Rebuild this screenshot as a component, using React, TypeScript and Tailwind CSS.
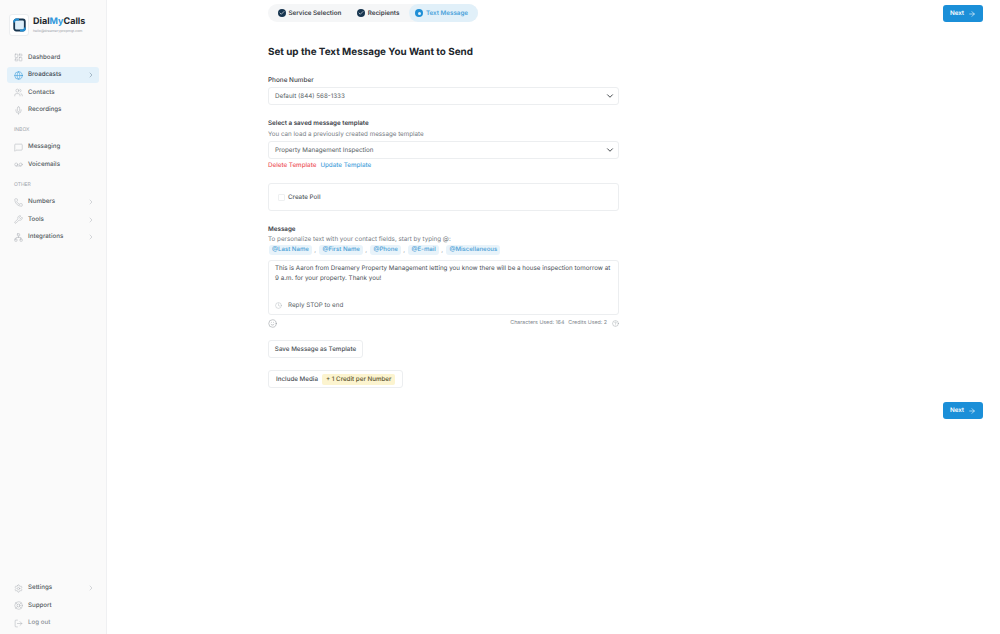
import React from "react";
import { ChevronRight, ChevronDown, ArrowRight, Check, LayoutDashboard, Globe, Users, Mic, MessageSquare, Voicemail, Phone, Wrench, Network, Settings, LifeBuoy, LogOut, Clock, Smile, HelpCircle } from "lucide-react";

function NavItem({ icon: Icon, label, active, chevron, muted }: { icon: any; label: string; active?: boolean; chevron?: boolean; muted?: boolean }) {
  return (
    <div className={`flex h-[16px] items-center rounded-[3px] pl-[7px] pr-[4px] ${active ? "bg-[#e3f1fa]" : ""}`}>
      <Icon size={9} strokeWidth={1.3} className={active ? "text-[#1f8fd6]" : "text-[#a8adb3]"} />
      <span className={`ml-[5px] flex-1 text-[6.2px] font-medium leading-[16px] ${active ? "text-[#3f4a54]" : muted ? "text-[#8a9097]" : "text-[#555c63]"}`}>{label}</span>
      {chevron && <ChevronRight size={8} strokeWidth={1.4} className={active ? "text-[#5c7a8e]" : "text-[#a8adb3]"} />}
    </div>
  );
}

function Step({ label, active, spacing }: { label: string; active?: boolean; spacing: string }) {
  return (
    <div className={`flex h-[18px] items-center gap-[2.5px] ${spacing} ${active ? "rounded-full bg-[#e1f0f9] text-[#4ca3db]" : "text-[#3c4249]"}`}>
      {active ? (
        <span className="flex h-[8px] w-[8px] items-center justify-center rounded-full bg-[#1f8fd6]">
          <span className="h-[3px] w-[3px] rounded-full bg-[#e1f0f9]" />
        </span>
      ) : (
        <span className="flex h-[8px] w-[8px] items-center justify-center rounded-full bg-[#17354f]">
          <Check size={6} strokeWidth={2.5} className="text-white" />
        </span>
      )}
      <span className="text-[6.25px] font-semibold leading-[18px]">{label}</span>
    </div>
  );
}

function NextButton() {
  return (
    <div className="flex h-[17px] w-[40px] items-center justify-center gap-[4px] rounded-[3px] bg-[#1b8fd8] text-white">
      <span className="text-[6.25px] font-semibold leading-[17px]">Next</span>
      <ArrowRight size={8} strokeWidth={1.8} />
    </div>
  );
}

function SelectBox({ value }: { value: string }) {
  return (
    <div className="flex h-[18px] items-center justify-between rounded-[3px] border border-[#eceef0] bg-white pl-[6px] pr-[3px]">
      <span className="text-[6.25px] leading-[16px] text-[#555c63]">{value}</span>
      <ChevronDown size={10} strokeWidth={2} className="text-[#22272c]" />
    </div>
  );
}

function Tag({ label }: { label: string }) {
  return <span className="flex h-[10px] items-center rounded-[3px] bg-[#e8f3fa] px-[3px] text-[6.1px] font-medium leading-[10px] text-[#4a9fd6]">{label}</span>;
}

function Comma() {
  return <span className="w-[3px] text-[6.25px] leading-[10px] text-[#9aa1a8]">,</span>;
}

export default function App() {
  return (
    <div className="flex h-[634px] w-[1000px] overflow-hidden bg-white font-['Inter',sans-serif] opacity-[0.999] [text-rendering:geometricPrecision]">
      <aside className="flex w-[107px] shrink-0 flex-col border-r border-[#eff0f2] bg-[#fafafa] pb-[3px]">
        <div className="ml-[9px] mt-[14px] flex items-center gap-[4px]">
          <div className="flex h-[22px] w-[20px] items-center justify-center rounded-[3px] border border-[#eceef0] bg-white">
            <svg width="13" height="14" viewBox="0 0 13 14">
              <rect x="1.2" y="1.5" width="10.6" height="11" rx="2" fill="#dceefa" stroke="#17354f" strokeWidth="1.8" />
              <path d="M1.2 4.5V3.5a2 2 0 0 1 2-2H6M7 12.5h2.8a2 2 0 0 0 2-2V9.5" fill="none" stroke="#1f8fd6" strokeWidth="1.8" />
            </svg>
          </div>
          <div className="flex flex-col">
            <span className="text-[9px] font-bold leading-[12px] text-[#22272c]">
              Dial<span className="text-[#2e96da]">My</span>Calls
            </span>
            <span className="text-[3.5px] leading-[6px] text-[#9aa1a8]">hello@dreamerypropmgt.com</span>
          </div>
        </div>

        <nav className="mt-[13.5px] flex flex-col gap-[1.5px] px-[7px]">
          <NavItem icon={LayoutDashboard} label="Dashboard" />
          <NavItem icon={Globe} label="Broadcasts" active chevron />
          <NavItem icon={Users} label="Contacts" />
          <NavItem icon={Mic} label="Recordings" />
        </nav>
        <div className="ml-[14px] mt-[7.5px] h-[9px] text-[5px] leading-[9px] text-[#9aa1a8]">INBOX</div>
        <nav className="mt-[4.5px] flex flex-col gap-[1.5px] px-[7px]">
          <NavItem icon={MessageSquare} label="Messaging" />
          <NavItem icon={Voicemail} label="Voicemails" />
        </nav>
        <div className="ml-[14px] mt-[8px] h-[9px] text-[5px] leading-[9px] text-[#9aa1a8]">OTHER</div>
        <nav className="mt-[4.5px] flex flex-col gap-[1.5px] px-[7px]">
          <NavItem icon={Phone} label="Numbers" chevron />
          <NavItem icon={Wrench} label="Tools" chevron />
          <NavItem icon={Network} label="Integrations" chevron />
        </nav>
        <nav className="mt-auto flex flex-col gap-[1.5px] px-[7px]">
          <NavItem icon={Settings} label="Settings" chevron />
          <NavItem icon={LifeBuoy} label="Support" />
          <NavItem icon={LogOut} label="Log out" muted />
        </nav>
      </aside>

      <main className="flex flex-1 flex-col pl-[161px] pr-[17px]">
        <div className="mt-[4px] flex items-start justify-between">
          <div className="flex h-[18px] items-center rounded-full bg-[#f5f6f7] pl-[4px]">
            <Step label="Service Selection" spacing="pl-[6px] pr-[8px]" />
            <Step label="Recipients" spacing="pl-[8px] pr-[10px]" />
            <Step label="Text Message" active spacing="pl-[6px] pr-[10px]" />
          </div>
          <div className="mt-[1px]"><NextButton /></div>
        </div>

        <h1 className="mt-[23px] text-[9.85px] font-bold leading-[14px] text-[#22272c]">Set up the Text Message You Want to Send</h1>

        <div className="flex w-[351px] flex-col">
          <label className="mt-[17px] text-[6.4px] font-medium leading-[9px] text-[#3c4249]">Phone Number</label>
          <div className="mt-[2px]"><SelectBox value="Default (844) 568-1333" /></div>

          <label className="mt-[14px] text-[6.25px] font-semibold leading-[9px] text-[#3c4249]">Select a saved message template</label>
          <p className="mt-[2px] text-[6.25px] leading-[9px] text-[#777d84]">You can load a previously created message template</p>
          <div className="mt-[2px]"><SelectBox value="Property Management Inspection" /></div>
          <div className="mt-[2px] flex gap-[4px] text-[6.25px] font-medium leading-[9px]">
            <span className="text-[#ee5a5f]">Delete Template</span>
            <span className="text-[#4ca3db]">Update Template</span>
          </div>

          <div className="mt-[13px] flex h-[28px] items-center rounded-[3px] border border-[#eceef0] pl-[9px]">
            <span className="h-[7px] w-[7px] rounded-[1px] border border-[#eef0f1]" />
            <span className="ml-[3px] text-[6.25px] font-medium leading-[10px] text-[#555c63]">Create Poll</span>
          </div>

          <label className="mt-[14px] text-[6.25px] font-semibold leading-[9px] text-[#3c4249]">Message</label>
          <p className="mt-[1px] text-[6.25px] leading-[9px] text-[#777d84]">To personalize text with your contact fields, start by typing @:</p>
          <div className="mt-[1px] flex gap-[2.25px] pl-[1px]">
            <Tag label="@Last Name" />
            <Comma />
            <Tag label="@First Name" />
            <Comma />
            <Tag label="@Phone" />
            <Comma />
            <Tag label="@E-mail" />
            <Comma />
            <Tag label="@Miscellaneous" />
          </div>
          <div className="mt-[5px] flex h-[55px] flex-col rounded-[3px] border border-[#eceef0] pl-[6px] pr-[6px]">
            <p className="mt-[3px] text-[6.25px] leading-[9.5px] text-[#4a5056]">
              This is Aaron from Dreamery Property Management letting you know there will be a house inspection tomorrow at 9 a.m. for your property. Thank you!
            </p>
            <div className="mt-auto mb-[4px] flex items-center gap-[6px]">
              <Clock size={7} strokeWidth={1.2} className="text-[#9aa1a8]" />
              <span className="text-[6.25px] leading-[10px] text-[#555c63]">Reply STOP to end</span>
            </div>
          </div>
          <div className="mt-[4px] flex items-center justify-between">
            <Smile size={9} strokeWidth={1.2} className="text-[#7d848b]" />
            <div className="flex items-center gap-[4px] text-[5.3px] leading-[9px] text-[#7d848b]">
              <span>Characters Used: 164</span>
              <span>Credits Used: 2</span>
              <HelpCircle size={7} strokeWidth={1.2} className="ml-[1px]" />
            </div>
          </div>

          <div className="mt-[12px] flex h-[18px] w-[95px] items-center justify-center rounded-[3px] border border-[#eceef0] text-[6.25px] font-medium leading-[10px] text-[#4a5056]">
            Save Message as Template
          </div>
          <div className="mt-[12px] flex h-[18px] w-[135px] items-center rounded-[3px] border border-[#eceef0] pl-[7px] text-[6.25px] font-medium leading-[10px] text-[#4a5056]">
            Include Media
            <span className="ml-[4px] flex h-[11px] items-center rounded-[2px] bg-[#fcf4cf] px-[4px] text-[#5b5430]">+ 1 Credit per Number</span>
          </div>
        </div>

        <div className="mt-[14px] flex justify-end"><NextButton /></div>
      </main>
    </div>
  );
}
